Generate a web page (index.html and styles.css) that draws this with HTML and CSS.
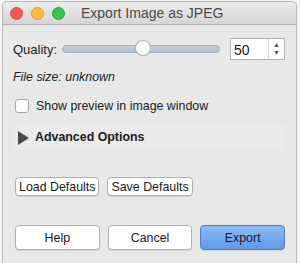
FILE: index.html
```html
<!DOCTYPE html>
<html lang="en">
<head>
    <meta charset="UTF-8">
    <title>Export Image as JPEG</title>
    <link rel="stylesheet" href="styles.css">
</head>
<body>
    <div class="window">
        <div class="titlebar">
            <span class="light red"></span>
            <span class="light yellow"></span>
            <span class="light green"></span>
            <span class="title">Export Image as JPEG</span>
        </div>
        <div class="content">
            <div class="row quality">
                <span>Quality:</span>
                <div class="slider"><div class="knob"></div></div>
                <div class="spin">
                    <span class="spin-value">50</span>
                    <span class="spin-arrows">&#9650;<br>&#9660;</span>
                </div>
            </div>
            <div class="filesize">File size: unknown</div>
            <div class="row check">
                <span class="box"></span>
                <span>Show preview in image window</span>
            </div>
            <div class="advanced">
                <span class="arrow"></span>
                <span>Advanced Options</span>
            </div>
            <div class="defaults">
                <button class="btn small">Load Defaults</button>
                <button class="btn small">Save Defaults</button>
            </div>
            <div class="actions">
                <button class="btn">Help</button>
                <button class="btn">Cancel</button>
                <button class="btn primary">Export</button>
            </div>
        </div>
    </div>
</body>
</html>
```

FILE: styles.css
```css
body {
    margin: 0;
    width: 300px;
    height: 263px;
    background: #f4f4f4;
    font-family: "Liberation Sans", Arial, sans-serif;
    font-size: 12.4px;
    color: #1a1a1a;
    overflow: hidden;
}
.window {
    margin: 1px 3px 0 2px;
    height: 262px;
    box-sizing: border-box;
    border: 1px solid #b9b9b9;
    border-bottom: none;
    border-radius: 5px 5px 0 0;
    background: #e8e8e8;
}
.titlebar {
    height: 22px;
    display: flex;
    align-items: center;
    padding-left: 7px;
    background: linear-gradient(#ececec, #d5d5d5);
    border-bottom: 1px solid #b4b4b4;
    border-radius: 5px 5px 0 0;
}
.light {
    width: 11px;
    height: 11px;
    border-radius: 50%;
    margin-right: 8px;
}
.red { background: #fc5753; border: 1px solid #df4744; }
.yellow { background: #fdbc40; border: 1px solid #de9f34; }
.green { background: #33c748; border: 1px solid #27aa35; }
.title {
    margin-left: 8px;
    font-size: 14px;
    color: #4a4a4a;
}
.content {
    padding: 13px 11px 0 10px;
}
.row {
    display: flex;
    align-items: center;
}
.quality {
    font-size: 13px;
}
.quality span:first-child {
    width: 49px;
}
.slider {
    position: relative;
    width: 156px;
    height: 6px;
    border: 1px solid #9fb4cc;
    border-radius: 4px;
    background: linear-gradient(#c7cfd9, #b4bdc8);
}
.knob {
    position: absolute;
    left: 73px;
    top: -5px;
    width: 14px;
    height: 14px;
    border-radius: 50%;
    background: #fdfdfd;
    box-shadow: 0 0 0 1px #b0b0b0, 0 1px 1px rgba(0,0,0,0.2);
}
.spin {
    margin-left: 10px;
    display: flex;
    height: 20px;
    width: 53px;
    border: 1px solid #b3b3b3;
    background: #fff;
}
.spin-value {
    flex: 1;
    padding: 3px 0 0 3px;
    font-size: 14px;
}
.spin-arrows {
    width: 15px;
    border-left: 1px solid #d0d0d0;
    font-size: 7px;
    line-height: 8px;
    text-align: center;
    color: #555;
    padding-top: 2px;
}
.filesize {
    margin-top: 10px;
    font-style: italic;
    color: #222;
}
.check {
    margin-top: 15px;
}
.box {
    width: 12px;
    height: 12px;
    margin: 0 7px 0 2px;
    border: 1px solid #a8a8a8;
    border-radius: 3px;
    background: #fff;
}
.advanced {
    margin-top: 11px;
    height: 26px;
    display: flex;
    align-items: center;
    background: #ebebeb;
    font-weight: bold;
}
.arrow {
    width: 0;
    height: 0;
    margin: 2px 6px 0 5px;
    border-top: 7px solid transparent;
    border-bottom: 7px solid transparent;
    border-left: 11px solid #4a4a4a;
}
.defaults {
    margin-top: 27px;
    display: flex;
    gap: 8px;
    padding-left: 2px;
}
.btn {
    font-family: "Liberation Sans", Arial, sans-serif;
    font-size: 12.4px;
    color: #1a1a1a;
    background: #fff;
    border: 1px solid #b0b0b0;
    border-radius: 4px;
    box-shadow: 0 1px 0 rgba(0,0,0,0.08);
    padding: 0;
}
.small {
    height: 19px;
    padding: 0 3px;
}
.actions {
    margin-top: 29px;
    display: flex;
    gap: 8px;
    padding-left: 2px;
}
.actions .btn {
    width: 85px;
    height: 25px;
}
.btn.primary {
    background: linear-gradient(#8dbbf3, #5d9be8);
    border-color: #4b82c8;
}
```
